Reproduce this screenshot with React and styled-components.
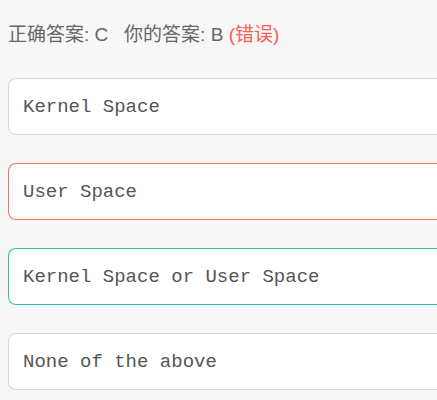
import React from "react";
import styled, { createGlobalStyle } from "styled-components";

const Global = createGlobalStyle`
  html, body { margin: 0; padding: 0; background: #f7f7f7; overflow: hidden; }
`;

const Page = styled.div`
  padding: 24px 0 0 8px;
  font-family: "Liberation Sans", "Noto Sans CJK SC", sans-serif;
`;

const Result = styled.div`
  font-size: 19px;
  line-height: 22px;
  color: #666;
  white-space: pre;
`;

const Wrong = styled.span`
  color: #f8604e;
`;

const List = styled.div`
  margin-top: 32px;
  display: flex;
  flex-direction: column;
  gap: 28px;
`;

const borderColors = { normal: "#d6d6d6", wrong: "#f3735a", right: "#2bc2a3" };

const Option = styled.div`
  box-sizing: border-box;
  height: 57px;
  display: flex;
  align-items: center;
  padding-left: 14px;
  background: #fff;
  border: 1px solid ${(p) => borderColors[p.$state || "normal"]};
  border-right: none;
  border-radius: 8px 0 0 8px;
  font-family: "Liberation Mono", monospace;
  font-size: 19px;
  color: #555;
  white-space: pre;
`;

export default function App() {
  return (
    <>
      <Global />
      <Page>
        <Result>
          {"正确答案: C   你的答案: B "}
          <Wrong>(错误)</Wrong>
        </Result>
        <List>
          <Option>Kernel Space</Option>
          <Option $state="wrong">User Space</Option>
          <Option $state="right">Kernel Space or User Space</Option>
          <Option>None of the above</Option>
        </List>
      </Page>
    </>
  );
}
